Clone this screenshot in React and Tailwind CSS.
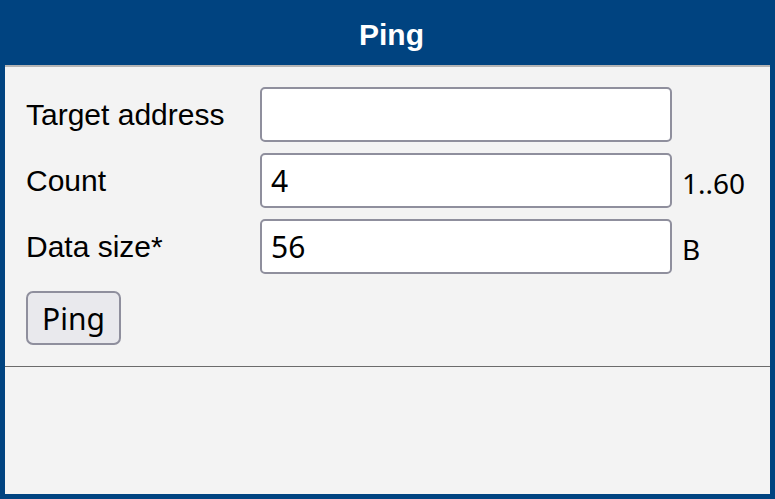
import React, { useState } from "react";

const inputClass =
  "h-[55px] w-[412px] bg-white border-2 border-[#8f8f9d] rounded-[5px] px-[9px] text-[30px] text-black outline-none font-['Noto_Sans','Open_Sans',sans-serif]";
const labelClass = "text-[30px] text-black font-['Liberation_Sans',Arial,sans-serif]";
const hintClass = "text-[28px] text-black pt-[4px] font-['Noto_Sans','Open_Sans',sans-serif]";

const App = () => {
  const [target, setTarget] = useState("");
  const [count, setCount] = useState("4");
  const [size, setSize] = useState("56");

  return (
    <div className="w-[775px] h-[499px] bg-[#004380] flex flex-col px-[5px] pb-[5px]">
      {/* Title bar */}
      <div className="h-[65px] shrink-0 flex items-center justify-center pt-[4px] pl-[8px] text-white font-bold text-[30px] font-['Liberation_Sans',Arial,sans-serif]">
        Ping
      </div>

      {/* Body */}
      <div className="flex-1 flex flex-col bg-[#f3f3f3] border-t-2 border-[#b4b4b4]">
        <div className="pl-[21px] pt-[20px] pb-[21px] border-b border-[#6b6b6b]">
          <div className="grid grid-cols-[224px_412px_auto] gap-x-[10px] gap-y-[11px] items-center">
            <label className={labelClass}>Target address</label>
            <input value={target} onChange={(e) => setTarget(e.target.value)} className={inputClass} />
            <span />

            <label className={labelClass}>Count</label>
            <input value={count} onChange={(e) => setCount(e.target.value)} className={inputClass} />
            <span className={hintClass}>1..60</span>

            <label className={labelClass}>Data size*</label>
            <input value={size} onChange={(e) => setSize(e.target.value)} className={inputClass} />
            <span className={hintClass}>B</span>
          </div>

          <button className="mt-[17px] h-[54px] px-[14px] bg-[#e9e9ed] border-2 border-[#8f8f9d] rounded-[7px] text-[30px] text-black font-['Noto_Sans','Open_Sans',sans-serif]">
            Ping
          </button>
        </div>
      </div>
    </div>
  );
};

export default App;
